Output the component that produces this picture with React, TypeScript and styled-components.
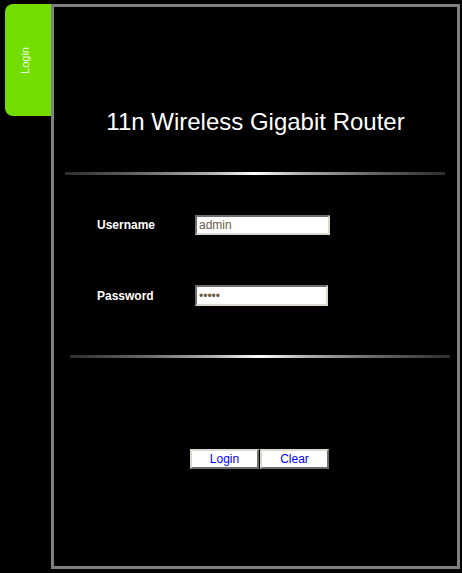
import React from 'react';
import styled, { createGlobalStyle } from 'styled-components';

const GlobalStyle = createGlobalStyle`
  html, body {
    margin: 0;
    padding: 0;
    background: #000000;
  }
  body {
    font-family: "Liberation Sans", Arial, sans-serif;
  }
`;

const Page = styled.div`
  display: flex;
  align-items: flex-start;
  padding: 4px 0 0 5px;
`;

const Tab = styled.div`
  width: 46px;
  height: 112px;
  box-sizing: border-box;
  background: #73dc00;
  border-radius: 8px 0 0 8px;
  display: flex;
  align-items: center;
  justify-content: center;
  padding-right: 6px;
`;

const TabLabel = styled.span`
  writing-mode: vertical-rl;
  transform: rotate(180deg);
  font-size: 11px;
  color: #eefbe0;
`;

const Panel = styled.div`
  width: 409px;
  height: 565px;
  box-sizing: border-box;
  border: 3px solid #7f7f7f;
  display: flex;
  flex-direction: column;
`;

const Title = styled.h1`
  margin: 103px 0 0;
  font-size: 24px;
  line-height: 24px;
  font-weight: normal;
  color: #ffffff;
  text-align: center;
`;

const Divider = styled.div<{ $offset: number; $top: number }>`
  width: 380px;
  height: 3px;
  margin-top: ${(p) => p.$top}px;
  margin-left: ${(p) => p.$offset}px;
  background: linear-gradient(
    to right,
    #2c2c2c 0%,
    #6a6a6a 20%,
    #b0b0b0 38%,
    #ffffff 50%,
    #b0b0b0 62%,
    #6a6a6a 80%,
    #2c2c2c 100%
  );
`;

const Form = styled.div`
  display: flex;
  flex-direction: column;
  gap: 50px;
  margin-top: 40px;
`;

const Row = styled.div`
  display: grid;
  grid-template-columns: 141px auto;
  align-items: center;
`;

const Label = styled.label`
  padding-left: 43px;
  font-size: 12px;
  font-weight: bold;
  color: #ffffff;
`;

const Field = styled.input<{ $w: number; $h: number }>`
  width: ${(p) => p.$w}px;
  height: ${(p) => p.$h}px;
  box-sizing: border-box;
  margin: 0;
  padding: 0 2px;
  border-width: 2px;
  border-style: solid;
  border-color: #6e6e6e #dcd8d0 #dcd8d0 #6e6e6e;
  background: #ffffff;
  font-family: "Liberation Sans", Arial, sans-serif;
  font-size: 12px;
  color: #6b5d45;
  outline: none;
`;

const Buttons = styled.div`
  display: flex;
  gap: 1px;
  margin-top: 91px;
  padding-left: 136px;
`;

const Button = styled.button`
  width: 69px;
  height: 20px;
  box-sizing: border-box;
  margin: 0;
  padding: 0;
  border-width: 2px;
  border-style: solid;
  border-color: #dcd8d0 #6e6e6e #6e6e6e #dcd8d0;
  background: #ffffff;
  font-family: "Liberation Sans", Arial, sans-serif;
  font-size: 12px;
  color: #0000ff;
`;

export default function App() {
  return (
    <Page>
      <GlobalStyle />
      <Tab>
        <TabLabel>Login</TabLabel>
      </Tab>
      <Panel>
        <Title>11n Wireless Gigabit Router</Title>
        <Divider $offset={11} $top={38} />
        <Form>
          <Row>
            <Label>Username</Label>
            <Field $w={135} $h={20} type="text" defaultValue="admin" />
          </Row>
          <Row>
            <Label>Password</Label>
            <Field $w={133} $h={21} type="password" defaultValue="admin" />
          </Row>
        </Form>
        <Divider $offset={16} $top={49} />
        <Buttons>
          <Button>Login</Button>
          <Button>Clear</Button>
        </Buttons>
      </Panel>
    </Page>
  );
}
